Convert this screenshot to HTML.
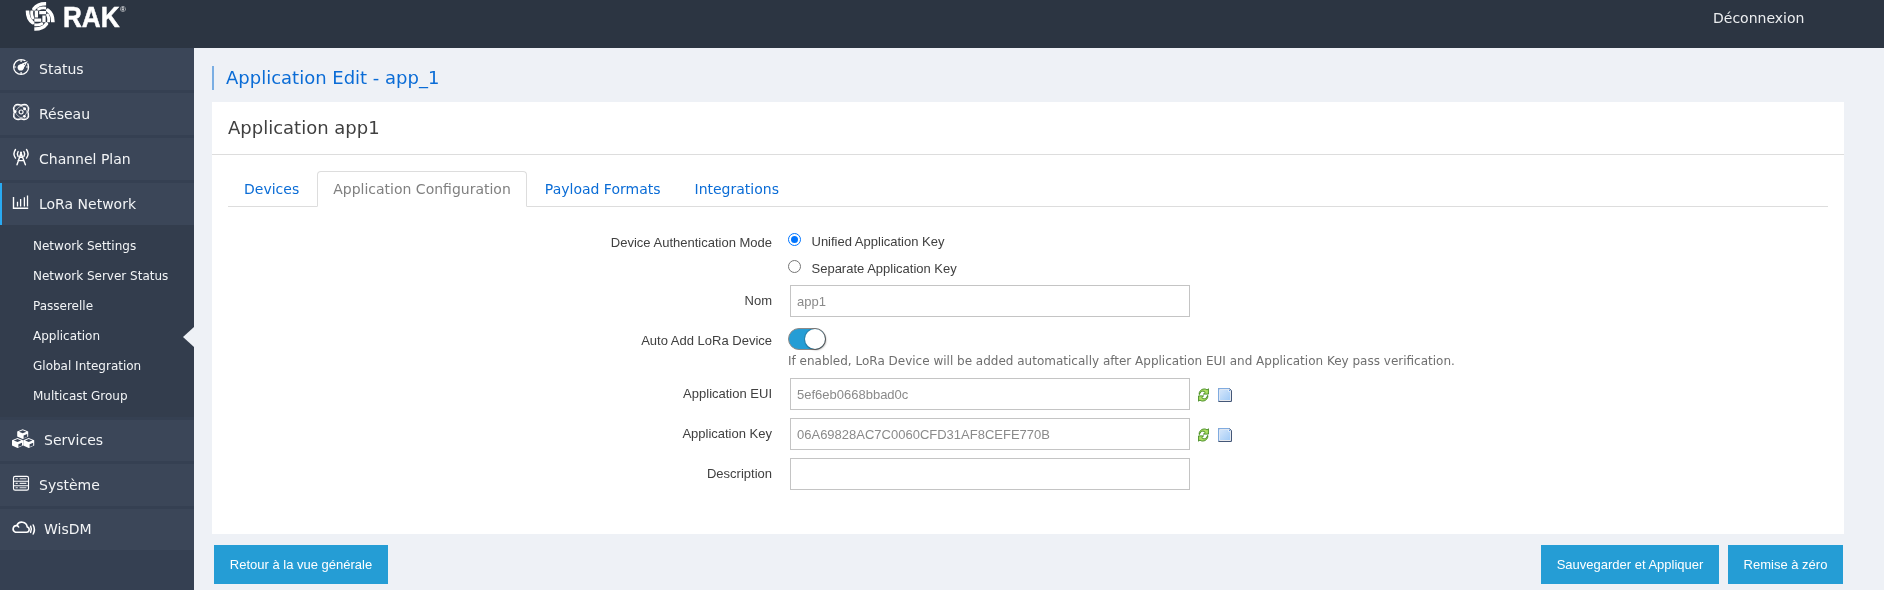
<!DOCTYPE html>
<html lang="fr">
<head>
<meta charset="utf-8">
<title>Application Edit - app_1</title>
<style>
*{box-sizing:border-box;margin:0;padding:0}
html,body{width:1884px;height:590px;overflow:hidden}
body{background:#eef1f6;font-family:"DejaVu Sans","Liberation Sans",sans-serif;font-size:14px;color:#404040;position:relative}
#wrap{position:absolute;left:0;top:0;width:1884px;height:590px;will-change:transform}
.abs{position:absolute}
header{position:absolute;left:0;top:0;width:1884px;height:48px;background:#2c3542}
header .logout{position:absolute;left:1713px;top:0;height:36px;line-height:36px;color:#eceef0;font-size:14px}
header .brand{position:absolute;left:62.8px;top:-0.25px;font-family:"Liberation Sans",sans-serif;font-weight:bold;font-size:28.7px;line-height:34px;color:#fff;-webkit-text-stroke:0.5px #fff;transform:scaleX(.911);transform-origin:0 0}
header .reg{position:absolute;left:120px;top:5.2px;font-family:"Liberation Sans",sans-serif;font-size:8px;line-height:10px;color:#fff}
nav{position:absolute;left:0;top:48px;width:194px;height:542px;background:#354052}
nav .item{position:absolute;left:0;width:194px;height:42px;background:#3b4658;color:#f2f4f6;font-size:14px;line-height:42px}
nav .item.wide{height:41px;line-height:41px}
nav .item span{position:absolute;left:39px;top:0}
nav .item.wide span{left:44px}
nav .item.active{border-left:2px solid #29aaf2}
nav .item.active span{left:37px}
nav .sub{position:absolute;left:0;top:177px;width:194px;height:192px;background:#333d4d}
nav .sub a{position:absolute;left:33px;color:#f2f4f6;font-size:12px;line-height:30px;height:30px;text-decoration:none}
nav .arrow{position:absolute;left:183px;top:278.5px;width:0;height:0;border-top:10px solid transparent;border-bottom:10px solid transparent;border-right:11px solid #eef1f6}
h2.title{position:absolute;left:212px;top:66px;height:24px;border-left:2px solid #7aaee3;padding-left:12px;font-size:18px;line-height:24px;font-weight:normal;color:#0a6cd6;white-space:nowrap}
.panel{position:absolute;left:212px;top:102px;width:1632px;height:432px;background:#fff}
.panel h3{position:absolute;left:16px;top:11px;font-size:18px;line-height:30px;font-weight:normal;color:#404040;white-space:nowrap}
.panel .hr{position:absolute;left:0;top:52px;width:1632px;height:1px;background:#ddd}
.tabs{position:absolute;left:16px;top:69px;width:1600px;height:36px;border-bottom:1px solid #ddd}
.tabs a{float:left;margin-right:2px;height:36px;line-height:34px;padding:0 15px;border:1px solid transparent;color:#0a6cd6;font-size:14px;text-decoration:none;white-space:nowrap}
.tabs a.on{color:#808080;background:#fff;border:1px solid #ddd;border-bottom-color:#fff;border-radius:4px 4px 0 0}
.lbl{position:absolute;left:0;width:560px;text-align:right;font-family:"Liberation Sans",sans-serif;font-size:13px;line-height:18px;color:#404040;white-space:nowrap}
.txt{position:absolute;font-family:"Liberation Sans",sans-serif;font-size:13px;line-height:18px;color:#404040;white-space:nowrap}
.inp{position:absolute;left:578px;width:400px;height:32px;border:1px solid #c4c4c4;background:#fff;font-family:"Liberation Sans",sans-serif;font-size:13px;line-height:30px;color:#8a8a8a;padding:1px 0 0 6px;white-space:nowrap}
.radio{position:absolute;width:13px;height:13px;border-radius:50%;border:1px solid #767676;background:#fff}
.radio.on{border:1px solid #0075ff}
.radio.on:after{content:"";position:absolute;left:2px;top:2px;width:7px;height:7px;border-radius:50%;background:#0075ff}
.toggle{position:absolute;left:576px;top:226px;width:38px;height:22px;border-radius:11px;background:#259dd5;border:1px solid #8f8a88}
.toggle:after{content:"";position:absolute;right:0;top:0;width:20px;height:20px;border-radius:50%;background:#fff;box-shadow:0 0 0 1px rgba(50,50,50,.22),1px 1px 2px rgba(0,0,0,.45)}
.help{position:absolute;left:576px;top:250px;font-size:12px;line-height:18px;color:#6f6f6f;white-space:nowrap}
.btn{position:absolute;top:545px;height:39px;line-height:40px;background:#259dd5;color:#fff;font-family:"Liberation Sans",sans-serif;font-size:13px;text-align:center;white-space:nowrap}
</style>
</head>
<body>
<div id="wrap">
<header>
  <svg class="abs" style="left:0;top:0" width="194" height="48" viewBox="0 0 194 48"><defs><clipPath id="lc"><rect x="-20" y="-20" width="25.9" height="40"/></clipPath></defs><g transform="translate(40.2,16.4)" fill="none" stroke="#fff" stroke-linecap="round"><g transform="rotate(0)"><g clip-path="url(#lc)"><path d="M9,-12.6 L5.8,-12.65 Q-2.4,-12.9 -6.2,-7.6" stroke-width="3.6"/><path d="M9,-8.3 L5.8,-8.3 Q1.2,-9 -1.5,-7.4" stroke-width="2.9"/><path d="M-1,-3.8 L9,-3.8" stroke-width="3.3" stroke-linecap="butt"/></g></g><g transform="rotate(90)"><g clip-path="url(#lc)"><path d="M9,-12.6 L5.8,-12.65 Q-2.4,-12.9 -6.2,-7.6" stroke-width="3.6"/><path d="M9,-8.3 L5.8,-8.3 Q1.2,-9 -1.5,-7.4" stroke-width="2.9"/><path d="M-1,-3.8 L9,-3.8" stroke-width="3.3" stroke-linecap="butt"/></g></g><g transform="rotate(180)"><g clip-path="url(#lc)"><path d="M9,-12.6 L5.8,-12.65 Q-2.4,-12.9 -6.2,-7.6" stroke-width="3.6"/><path d="M9,-8.3 L5.8,-8.3 Q1.2,-9 -1.5,-7.4" stroke-width="2.9"/><path d="M-1,-3.8 L9,-3.8" stroke-width="3.3" stroke-linecap="butt"/></g></g><g transform="rotate(270)"><g clip-path="url(#lc)"><path d="M9,-12.6 L5.8,-12.65 Q-2.4,-12.9 -6.2,-7.6" stroke-width="3.6"/><path d="M9,-8.3 L5.8,-8.3 Q1.2,-9 -1.5,-7.4" stroke-width="2.9"/><path d="M-1,-3.8 L9,-3.8" stroke-width="3.3" stroke-linecap="butt"/></g></g></g></svg>
  <div class="brand">RAK</div>
  <div class="reg">®</div>
  <div class="logout">Déconnexion</div>
</header>
<nav>
  <div class="item" style="top:0"><span>Status</span></div>
  <div class="item" style="top:45px"><span>Réseau</span></div>
  <div class="item" style="top:90px"><span>Channel Plan</span></div>
  <div class="item active" style="top:135px"><span>LoRa Network</span></div>
  <div class="sub">
    <a style="top:6px">Network Settings</a>
    <a style="top:36px">Network Server Status</a>
    <a style="top:66px">Passerelle</a>
    <a style="top:96px">Application</a>
    <a style="top:126px">Global Integration</a>
    <a style="top:156px">Multicast Group</a>
  </div>
  <div class="arrow"></div>
  <div class="item wide" style="top:372px"><span>Services</span></div>
  <div class="item wide" style="top:416px;height:42px;line-height:43px"><span style="left:39px">Système</span></div>
  <div class="item wide" style="top:461px"><span>WisDM</span></div>
<svg class="abs" style="left:0;top:-48px;pointer-events:none" width="194" height="590" viewBox="0 0 194 590" fill="none" stroke="#fff" stroke-width="1.3">
<!-- status -->
<circle cx="21.1" cy="67" r="7.45" stroke-width="1.3"/>
<path d="M21.1,59.9v2.1M21.1,72v2.1M14,67h2.1M26.1,67h2.1" stroke-width="1.2"/>
<path d="M18.6,64.6 L28.2,60.4 L23.4,69.6 Z" fill="#fff" stroke="#3b4658" stroke-width="1.4" stroke-linejoin="round"/>
<circle cx="20.7" cy="67.5" r="3.1" fill="#fff" stroke="none"/>
<path d="M19.4,65 L27.8,60.9 L23.2,69 Z" fill="#fff" stroke="none"/>
<path d="M23.6,64.2 L25.3,63.4 L24.6,65 Z" fill="#3b4658" stroke="none"/>
<!-- reseau -->
<g transform="translate(21.1,112)">
<ellipse rx="8.5" ry="5.2" transform="rotate(45)" stroke-width="2.2"/>
<ellipse rx="8.5" ry="5.2" transform="rotate(-45)" stroke-width="2.2"/>
<ellipse rx="8.5" ry="5.2" transform="rotate(45)" fill="#3b4658" stroke="none"/>
<ellipse rx="8.5" ry="5.2" transform="rotate(-45)" fill="#3b4658" stroke="none"/>
<ellipse rx="8.3" ry="5" transform="rotate(45)" stroke-width="0.8" stroke-opacity=".7"/>
<ellipse rx="8.3" ry="5" transform="rotate(-45)" stroke-width="0.8" stroke-opacity=".7"/>
<circle r="2" stroke-width="1.2"/>
<circle cx="3.5" cy="-3.3" r="1.5" fill="#fff" stroke="none"/>
<circle cx="-6.1" cy="-0.5" r="1.5" fill="#fff" stroke="none"/>
<circle cx="3.3" cy="4.3" r="1.4" fill="#fff" stroke="none"/>
</g>
<!-- channel plan -->
<g stroke-width="1.4" stroke-linecap="round">
<path d="M21,153 L17,164.8 M21,153 L25.4,164.8 M19.3,157.2 H22.7 M18,160.6 H24"/>
<circle cx="21" cy="152.6" r="1" fill="#fff" stroke="none"/>
<path d="M15.5,149.5 Q12.4,153.8 15.5,158.1"/>
<path d="M26.5,149.5 Q29.6,153.8 26.5,158.1"/>
<path d="M18.1,151.6 Q16.5,154 18.1,156.4"/>
<path d="M23.9,151.6 Q25.5,154 23.9,156.4"/>
</g>
<!-- lora -->
<path d="M13.5,197 V208.3 H28.2" stroke-width="1.4"/>
<path d="M17.5,201.8 V206.4 M20.6,199 V206.4 M24.4,197.2 V206.4 M27.5,195.6 V206.4" stroke-width="1.3"/>
<!-- services cubes -->
<g stroke="none" fill="#fff">
<path d="M22.7,429.2 L28.2,431.5 V436.6 L22.7,438.9 L17.2,436.6 V431.5 Z"/>
<path d="M17.5,438 L23,440.3 V445.4 L17.5,447.9 L12,445.4 V440.3 Z"/>
<path d="M28.7,438 L34.2,440.3 V445.4 L28.7,447.9 L23.2,445.4 V440.3 Z"/>
</g>
<g stroke="none" fill="#3b4658">
<path d="M22.7,430.2 L26.4,431.7 L22.7,433.2 L19.0,431.7 Z"/>
<path d="M23.6,435.5 L27.2,434.0 V436.7 L23.6,438.2 Z"/>
<path d="M17.5,439.0 L21.2,440.5 L17.5,442.0 L13.8,440.5 Z"/>
<path d="M18.4,444.3 L22.0,442.8 V445.5 L18.4,447.0 Z"/>
<path d="M28.7,439.0 L32.4,440.5 L28.7,442.0 L25.0,440.5 Z"/>
<path d="M29.6,444.3 L33.2,442.8 V445.5 L29.6,447.0 Z"/>
</g>
<!-- systeme -->
<rect x="13.5" y="476.4" width="15" height="13.8" rx="1.6" stroke-width="1.15"/>
<path d="M13.5,481.2 H28.5 M13.5,485.7 H28.5" stroke-width="1.05"/>
<path d="M15.6,478.7 H17.8 M19.6,478.7 H26.4 M15.6,483.4 H17.8 M19.6,483.4 H26.4 M15.6,487.8 H17.8 M19.6,487.8 H26.4" stroke-width="1.1" stroke-opacity=".85"/>
<!-- wisdm -->
<g stroke-width="1.6" stroke-linecap="round" stroke-linejoin="round">
<path d="M15.4,532.2 H26.6 A2.7,2.7 0 0 0 27.2,526.9 A5.4,5.4 0 0 0 16.8,525.6 A3.4,3.4 0 0 0 15.4,532.2 Z M16.8,525.6 Q18,525.8 18.6,527"/>
<path d="M30.6,526.2 Q32.2,529.3 30.6,532.4" stroke-width="1.5"/>
<path d="M33.2,525 Q35.6,529.5 33.2,534" stroke-width="1.5"/>
</g>
</svg>
</nav>
<h2 class="title">Application Edit - app_1</h2>
<svg width="0" height="0" style="position:absolute"><defs>
<linearGradient id="pg" x1="0" y1="0" x2="1" y2="1"><stop offset="0" stop-color="#d3e5fa"/><stop offset="1" stop-color="#a3ccf7"/></linearGradient>
<g id="ic-refresh"><g id="ic-arr"><path d="M1.1,6.1 C0.9,3.4 3.2,0.5 6.3,0.5 C7.6,0.5 8.6,0.9 9.3,1.6 L10.6,0.3 L10.6,5.8 L5.5,5.8 L7.4,4 C6.7,3.1 5.7,2.7 4.8,2.8 C3.3,3 2,4.2 1.6,6.1 Z" fill="#b0e066" stroke="#32800f" stroke-width="0.85" stroke-linejoin="miter"/></g><use href="#ic-arr" transform="rotate(180 5.6 6.7)"/></g>
<g id="ic-page"><path d="M0.6,0.6 H11.4 L13.4,2.6 V13.4 H0.6 Z" fill="#fff" stroke="#2e4468" stroke-width="1" stroke-linejoin="round"/><path d="M0.6,13 V0.6 H11.2" fill="none" stroke="#86b4ec" stroke-width="1"/><path d="M1.9,1.9 H10.4 V3.6 H12.1 V12.1 H1.9 Z" fill="url(#pg)"/><path d="M11,1.2 L12.8,3 H11 Z" fill="#5b93de"/></g>
</defs></svg>
<div class="panel">
  <h3>Application app1</h3>
  <div class="hr"></div>
  <div class="tabs">
    <a>Devices</a>
    <a class="on">Application Configuration</a>
    <a>Payload Formats</a>
    <a>Integrations</a>
  </div>
  <div class="lbl" style="top:132px">Device Authentication Mode</div>
  <div class="radio on" style="left:576px;top:131px"></div>
  <div class="txt" style="left:599.5px;top:131px">Unified Application Key</div>
  <div class="radio" style="left:576px;top:158px"></div>
  <div class="txt" style="left:599.5px;top:158px">Separate Application Key</div>
  <div class="lbl" style="top:190px">Nom</div>
  <div class="inp" style="top:183px">app1</div>
  <div class="lbl" style="top:230px">Auto Add LoRa Device</div>
  <div class="toggle"></div>
  <div class="help">If enabled, LoRa Device will be added automatically after Application EUI and Application Key pass verification.</div>
  <div class="lbl" style="top:283px">Application EUI</div>
  <div class="inp" style="top:276px">5ef6eb0668bbad0c</div>
  <div class="lbl" style="top:323px">Application Key</div>
  <div class="inp" style="top:316px">06A69828AC7C0060CFD31AF8CEFE770B</div>
  <svg class="abs" style="left:986px;top:286px" width="11" height="14" viewBox="0 0 11.2 13.4"><use href="#ic-refresh"/></svg>
  <svg class="abs" style="left:1006px;top:286px" width="14" height="14" viewBox="0 0 14 14"><use href="#ic-page"/></svg>
  <svg class="abs" style="left:986px;top:326px" width="11" height="14" viewBox="0 0 11.2 13.4"><use href="#ic-refresh"/></svg>
  <svg class="abs" style="left:1006px;top:326px" width="14" height="14" viewBox="0 0 14 14"><use href="#ic-page"/></svg>
  <div class="lbl" style="top:363px">Description</div>
  <div class="inp" style="top:356px"></div>
</div>
<div class="btn" style="left:214px;width:174px">Retour à la vue générale</div>
<div class="btn" style="left:1541px;width:178px">Sauvegarder et Appliquer</div>
<div class="btn" style="left:1728px;width:115px">Remise à zéro</div>
</div>
</body>
</html>
